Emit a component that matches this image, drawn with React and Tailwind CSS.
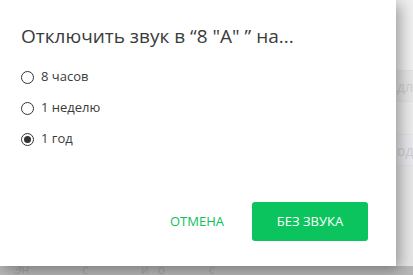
import { useState } from 'react'

const options = ['8 часов', '1 неделю', '1 год']

const Radio = ({ checked }) => (
  <span className="flex h-[13px] w-[13px] items-center justify-center rounded-full border border-[#333] bg-white">
    {checked && <span className="h-[7px] w-[7px] rounded-full bg-[#333]" />}
  </span>
)

export default function App() {
  const [value, setValue] = useState(2)

  return (
    <div className="relative h-[275px] w-[413px] overflow-hidden bg-[#b9b9b9] font-['Open_Sans',sans-serif]">
      {/* backdrop content peeking out at the right and bottom */}
      <div className="absolute right-0 top-0 flex h-[266px] w-[30px] flex-col bg-[#e9e9e9]">
        <div className="h-[70px] bg-[#efefef]" />
        <div className="flex h-[32px] items-center border-y border-[#e2e2e2] bg-[#e6e6e6] pl-[14px] text-[14px] text-[#cfcfcf]">дле</div>
        <div className="h-[32px] bg-[#ebebeb]" />
        <div className="flex h-[32px] items-center border-y border-[#e2e2e2] bg-[#e8e8ee] pl-[14px] text-[14px] text-[#cfcfcf]">одн</div>
        <div className="flex-1 bg-[#e6e6e6]" />
      </div>
      <div className="absolute bottom-0 left-[14px] whitespace-pre text-[12px] leading-[10px] text-[#a5a5a5]">Эн                 с                 й   о              с</div>

      <div className="relative flex h-[266px] w-[396px] flex-col bg-white shadow-[4px_4px_14px_rgba(0,0,0,0.35)]">
        <h1 className="pl-[21px] pt-[22px] text-[19px] leading-[28px] text-[#3b3b3b]">
          Отключить звук в “8 "А" ” на...
        </h1>

        <div className="mt-[18px] flex flex-col gap-[13px] pl-[21px]">
          {options.map((o, i) => (
            <label key={o} className="flex h-[18px] cursor-pointer items-center gap-[7px] text-[13px] text-[#3b3b3b]" onClick={() => setValue(i)}>
              <Radio checked={value === i} />
              <span>{o}</span>
            </label>
          ))}
        </div>

        <div className="mt-auto flex items-center justify-end gap-[28px] pb-[25px] pr-[28px]">
          <button className="text-[13px] text-[#0bc15c]">ОТМЕНА</button>
          <button className="h-[39px] w-[116px] rounded-[3px] bg-[#0bc45d] text-[13px] text-white">БЕЗ ЗВУКА</button>
        </div>
      </div>
    </div>
  )
}
